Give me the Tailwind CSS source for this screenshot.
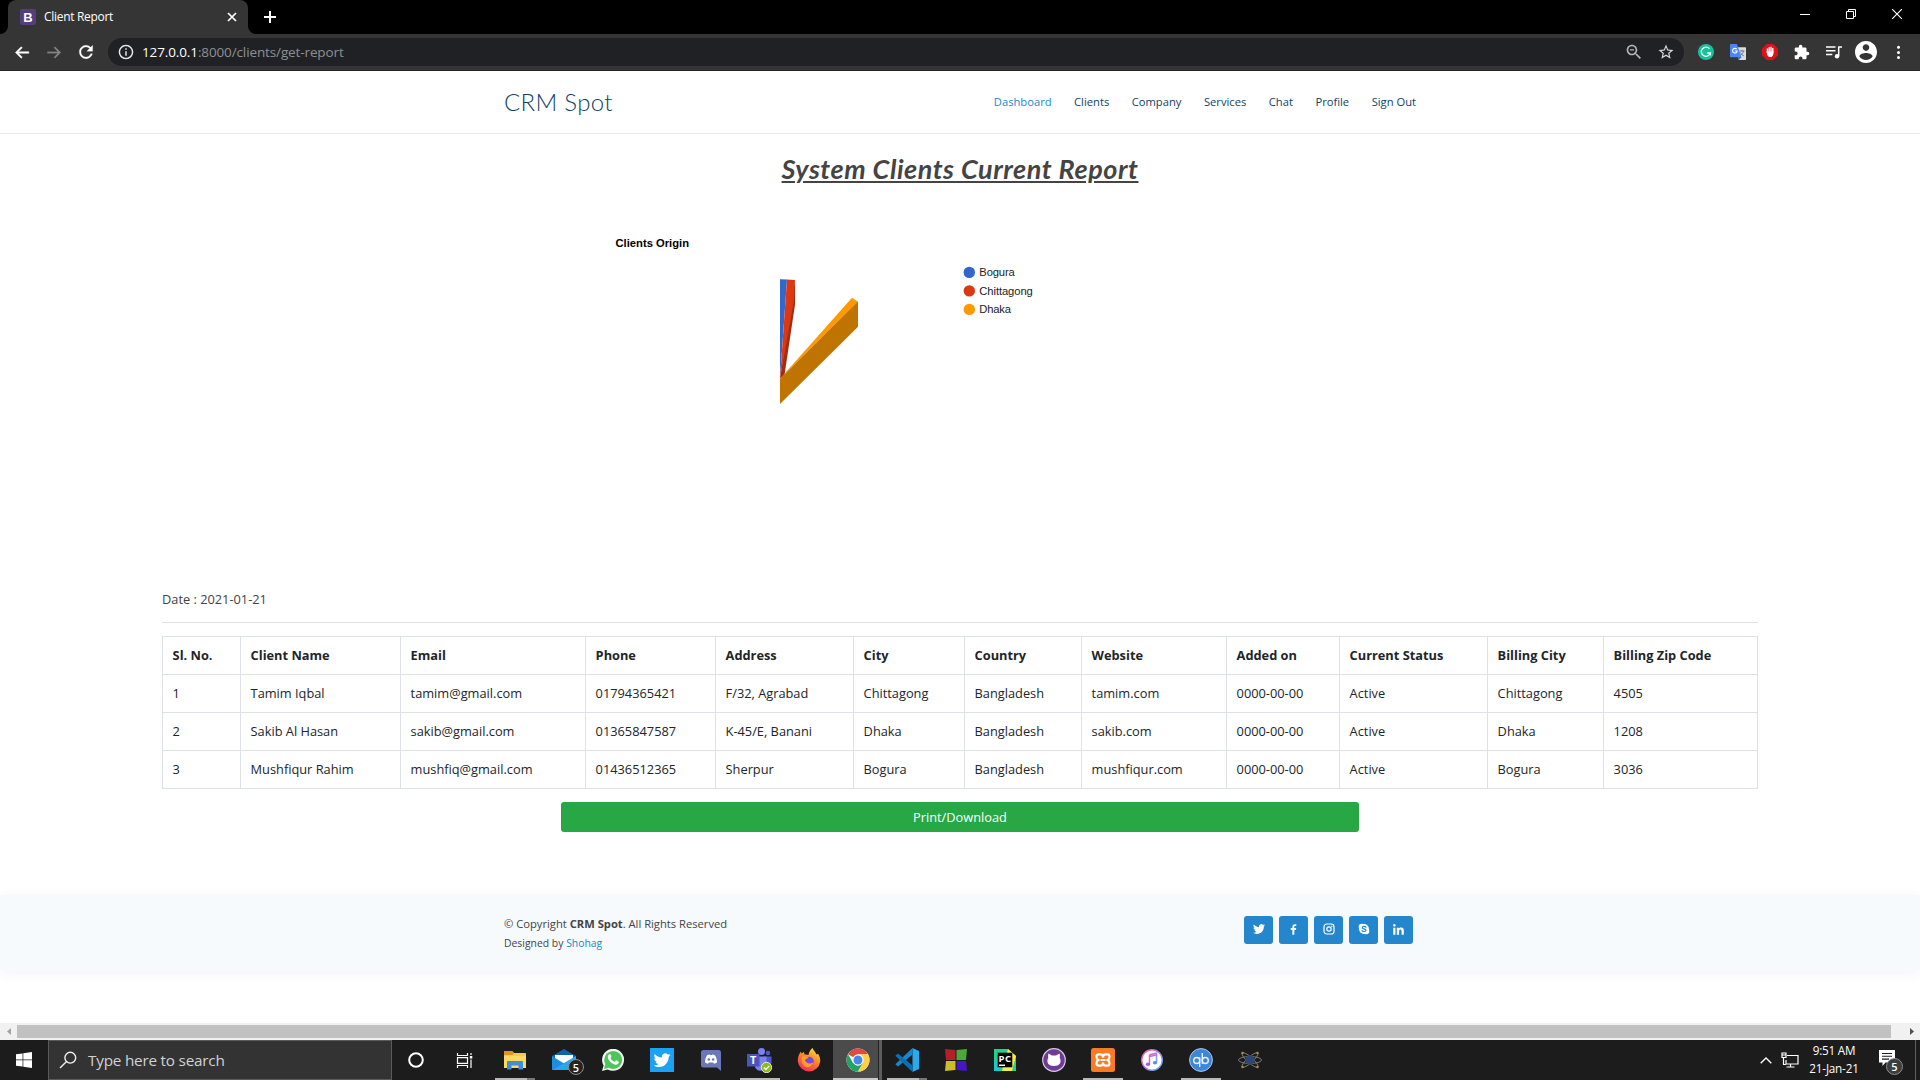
<!DOCTYPE html>
<html lang="en">
<head>
<meta charset="utf-8">
<title>Client Report</title>
<script src="https://cdn.jsdelivr.net/npm/@tailwindcss/browser@4"></script>
</head>
<body class="flex h-screen w-screen flex-col overflow-hidden bg-white font-['Open_Sans',sans-serif] text-[#444444]">

<!-- Tab strip -->
<div class="flex h-[34px] shrink-0 bg-black pl-2 text-white">
  <div class="relative flex w-60 items-center rounded-t-lg bg-[#353535] pl-3 pr-2.5">
    <svg class="absolute -left-2 bottom-0 size-2" viewBox="0 0 8 8"><path d="M8 0v8H0a8 8 0 0 0 8-8z" fill="#353535"/></svg>
    <svg class="absolute -right-2 bottom-0 size-2" viewBox="0 0 8 8"><path d="M0 0v8h8a8 8 0 0 1-8-8z" fill="#353535"/></svg>
    <div class="flex size-4 items-center justify-center rounded-[2px] bg-[#563d7c] font-['Liberation_Sans',sans-serif] text-[13px] font-bold leading-none">B</div>
    <span class="ml-2 grow text-[12px] leading-4 tracking-[-0.3px]">Client Report</span>
    <svg class="size-3" viewBox="0 0 12 12" stroke="#fff" stroke-width="1.7"><path d="M2 2l8 8M10 2l-8 8"/></svg>
  </div>
  <svg class="ml-4 mt-[11px] size-3" viewBox="0 0 12 12" stroke="#fff" stroke-width="2"><path d="M6 0v12M0 6h12"/></svg>
  <div class="ml-auto flex h-7 items-center">
    <div class="flex w-[46px] justify-center"><svg class="size-[10px]" viewBox="0 0 10 10" stroke="#fff"><path d="M0 5.5h10"/></svg></div>
    <div class="flex w-[46px] justify-center"><svg class="size-[10px]" viewBox="0 0 10 10" stroke="#fff" fill="none"><path d="M.5 2.5h7v7h-7zM2.500 2.500v-2h7v7h-2"/></svg></div>
    <div class="flex w-[46px] justify-center"><svg class="size-[10px]" viewBox="0 0 10 10" stroke="#fff" stroke-width="1.100"><path d="M0 0l10 10M10 0L0 10"/></svg></div>
  </div>
</div>

<!-- Toolbar -->
<div class="flex h-[37px] shrink-0 items-center border-b border-[#262628] bg-[#353535] px-1.5">
  <div class="flex w-8 justify-center"><svg class="size-[19px]" viewBox="1 0 24 24" fill="#fff"><path d="M21 11H7.830l4.880-4.880L11.300 4.700 4 12l7.300 7.300 1.410-1.410L7.830 13H21z" stroke="#fff" stroke-width=".6"/></svg></div>
  <div class="flex w-8 justify-center"><svg class="size-[19px]" viewBox="0 0 24 24" fill="#858585"><path d="M3 11h13.170l-4.880-4.880 1.410-1.420L20 12l-7.300 7.300-1.410-1.410L16.170 13H3z" stroke="#858585" stroke-width=".3"/></svg></div>
  <div class="flex w-8 justify-center"><svg class="size-[20px]" viewBox="0 0 24 24" fill="#fff"><path d="M17.65 6.35C16.2 4.9 14.21 4 12 4c-4.42 0-7.99 3.58-7.99 8s3.57 8 7.99 8c3.73 0 6.84-2.55 7.73-6h-2.08c-.82 2.33-3.04 4-5.65 4-3.31 0-6-2.69-6-6s2.69-6 6-6c1.66 0 3.14.69 4.22 1.78L13 11h7V4l-2.35 2.35z" stroke="#fff" stroke-width=".3"/></svg></div>
  <div class="ml-1.5 mr-1.5 flex h-7 grow items-center rounded-full bg-[#202124] pl-2.5 pr-[9px]">
    <svg class="size-4" viewBox="1 1 22 22" fill="#e8eaed"><path d="M11 7h2v2h-2zm0 4h2v6h-2zm1-9C6.48 2 2 6.48 2 12s4.48 10 10 10 10-4.48 10-10S17.520 2 12 2zm0 18c-4.410 0-8-3.590-8-8s3.590-8 8-8 8 3.590 8 8-3.590 8-8 8z"/></svg>
    <span class="ml-2 grow text-[13.5px] leading-5 tracking-[-0.12px] text-[#8f9092]"><span class="text-white">127.0.0.1</span>:8000/clients/get-report</span>
    <svg class="mr-[14px] size-[18px]" viewBox="1 1 22 22" fill="#b4b5b7"><path d="M15.500 14h-.79l-.28-.27C15.410 12.590 16 11.110 16 9.500 16 5.910 13.090 3 9.500 3S3 5.910 3 9.500 5.910 16 9.500 16c1.610 0 3.090-.59 4.230-1.570l.27.28v.79l5 4.990L20.490 19l-4.990-5zm-6 0C7.010 14 5 11.990 5 9.500S7.010 5 9.500 5 14 7.010 14 9.500 11.990 14 9.500 14zM7 8.600h5v1.700H7z"/></svg>
    <svg class="size-[18px]" viewBox="0 0 24 24" fill="#d5d6d8"><path d="M22 9.240l-7.190-.62L12 2 9.190 8.630 2 9.240l5.460 4.730L5.820 21 12 17.270 18.180 21l-1.630-7.030L22 9.240zM12 15.400l-3.760 2.270 1-4.280-3.320-2.880 4.380-.38L12 6.100l1.710 4.040 4.380.38-3.320 2.880 1 4.280L12 15.400z"/></svg>
  </div>
  <div class="flex w-8 justify-center"><svg class="size-4" viewBox="0 0 16 16" fill="none"><circle cx="8" cy="8" r="8" fill="#15c39a"/><path d="M11.500 4.700A4.600 4.600 0 1 0 12.400 9H9.300M12.400 9v2.600" stroke="#fff" stroke-width="1.300"/></svg></div>
  <div class="flex w-8 justify-center"><svg class="size-4" viewBox="0 0 16 16"><path d="M6 3.200h9.300c.4 0 .7.300.7.700V15.300c0 .4-.3.700-.7.700H8.800z" fill="#dcdcdc"/><path d="M9.500 7h5M12 5.800V7m1.600 0c-.4 2-2 3.600-3.600 4.600M10.500 8.500c.7 1.600 2 2.800 3.400 3.400" stroke="#6c7a89" fill="none"/><path d="M8.800 16L7.900 13h3.700z" fill="#3367d6"/><path d="M.7 0h6.200l4.500 13.200H.7A.7.700 0 0 1 0 12.500V.7C0 .3.300 0 .7 0z" fill="#4a87ee"/><path d="M6.700 5.200A2.300 2.300 0 1 0 7.200 7H4.900" stroke="#fff" stroke-width="1.100" fill="none"/></svg></div>
  <div class="flex w-8 justify-center"><svg class="size-4" viewBox="0 0 16 16"><path d="M4.700 0h6.600L16 4.700v6.600L11.300 16H4.700L0 11.300V4.700z" fill="#e0101b"/><path d="M5.400 8.500V5M7.200 8V3.600M9 8V3.300M10.800 8.500V4.500" stroke="#fff" stroke-width="1.400" stroke-linecap="round"/><path d="M4.700 7.500h6.800c.1 3-.6 5.600-3.300 5.600-2.200 0-3.500-2-3.500-5.600z" fill="#fff"/></svg></div>
  <div class="flex w-8 justify-center"><svg class="size-4" viewBox="1 0 23 23" fill="#fff"><path d="M20.500 11H19V7c0-1.100-.9-2-2-2h-4V3.500C13 2.120 11.880 1 10.500 1S8 2.120 8 3.500V5H4c-1.100 0-1.990.9-1.990 2v3.800H3.500c1.490 0 2.700 1.210 2.700 2.700s-1.210 2.700-2.700 2.700H2V20c0 1.100.9 2 2 2h3.800v-1.500c0-1.490 1.210-2.700 2.700-2.700 1.490 0 2.700 1.210 2.700 2.700V22H17c1.100 0 2-.9 2-2v-4h1.500c1.380 0 2.500-1.120 2.500-2.500S21.880 11 20.500 11z"/></svg></div>
  <div class="flex w-8 justify-center"><svg class="size-4" viewBox="0 0 16 16" fill="none" stroke="#fff" stroke-width="1.500"><path d="M0 3h9.500M0 6.700h9.500M0 10.400h6.300M16 3h-3.300v9"/><circle cx="11" cy="12.200" r="2.200" fill="#fff" stroke="none"/></svg></div>
  <div class="flex w-8 justify-center"><svg class="size-[22px]" viewBox="2 2 20 20" fill="#fff"><path d="M12 2C6.480 2 2 6.480 2 12s4.480 10 10 10 10-4.480 10-10S17.520 2 12 2zm0 3c1.660 0 3 1.340 3 3s-1.340 3-3 3-3-1.340-3-3 1.340-3 3-3zm0 14.200c-2.500 0-4.710-1.280-6-3.220.03-1.990 4-3.080 6-3.080 1.990 0 5.970 1.090 6 3.080-1.290 1.940-3.500 3.220-6 3.220z"/></svg></div>
  <div class="flex w-8 justify-center"><svg class="h-4 w-1" viewBox="0 0 4 16" fill="#fff"><circle cx="2.500" cy="3.200" r="1.500"/><circle cx="2.500" cy="8.400" r="1.500"/><circle cx="2.500" cy="13.600" r="1.500"/></svg></div>
</div>

<!-- Site header -->
<header class="flex h-[63px] shrink-0 items-center justify-between border-b border-[#e9ebec] px-[504px]">
  <div class="whitespace-nowrap font-['Lato',sans-serif] text-[24px] font-light leading-8 tracking-[0.3px] text-[#124265]">CRM Spot</div>
  <nav class="flex gap-[22.5px] whitespace-nowrap text-[11.2px] leading-4 text-[#124265]">
    <a class="text-[#2487ce]">Dashboard</a><a>Clients</a><a>Company</a><a>Services</a><a>Chat</a><a>Profile</a><a>Sign Out</a>
  </nav>
</header>

<!-- Report -->
<main class="flex h-[761px] shrink-0 flex-col items-center">
  <h2 class="mt-[17px] whitespace-nowrap font-['Lato',sans-serif] text-[27px] font-bold italic leading-[36px] tracking-[0.54px] underline decoration-2 underline-offset-2">System Clients Current Report</h2>
  <svg class="h-[382px] w-[960px] shrink-0" viewBox="480 187 960 382" font-family="'Liberation Sans',Arial,sans-serif" font-size="11.200">
    <text x="615.500" y="247" font-weight="bold" fill="#000" textLength="73.500">Clients Origin</text>
    <path d="M780 279.300l7 .3-7 98.400z" fill="#3366cc"/>
    <path d="M795 280.300v24.200L784.500 375 780 378.500z" fill="#a52a0e"/>
    <path d="M787 279.600l8 .5-1.300 22L780 378.500z" fill="#dc3912"/>
    <path d="M780 378.800L852 297.800l6 4z" fill="#ff9900"/>
    <path d="M780 378.800l78-77.300v25.200l-78 77.300z" fill="#bf7300"/>
    <g fill="#222"><circle cx="969.300" cy="272.400" r="5.700" fill="#3366cc"/><text x="979.300" y="276" textLength="35.500">Bogura</text>
    <circle cx="969.300" cy="290.900" r="5.700" fill="#dc3912"/><text x="979.300" y="294.700" textLength="53.500">Chittagong</text>
    <circle cx="969.300" cy="309.400" r="5.700" fill="#ff9900"/><text x="979.300" y="313" textLength="31.700">Dhaka</text></g>
  </svg>
  <div class="mt-[20px] w-[1596px] border-b border-[#e1e1e1] pb-[13px] text-[12.8px] leading-[20px]">Date : 2021-01-21</div>
  <table class="mt-[13px] w-[1596px] table-fixed border-collapse text-left text-[12.8px] leading-[19px] text-[#212529] [&_td]:border [&_td]:border-[#dee2e6] [&_td]:pl-[9.6px] [&_th]:border [&_th]:border-[#dee2e6] [&_th]:pl-[9.6px] [&_tr]:h-[38px]">
    <colgroup><col class="w-[78px]"><col class="w-[160px]"><col class="w-[185px]"><col class="w-[130px]"><col class="w-[138px]"><col class="w-[111px]"><col class="w-[117px]"><col class="w-[145px]"><col class="w-[113px]"><col class="w-[148px]"><col class="w-[116px]"><col></colgroup>
    <thead><tr><th>Sl. No.</th><th>Client Name</th><th>Email</th><th>Phone</th><th>Address</th><th>City</th><th>Country</th><th>Website</th><th>Added on</th><th>Current Status</th><th>Billing City</th><th>Billing Zip Code</th></tr></thead>
    <tbody>
      <tr><td>1</td><td>Tamim Iqbal</td><td>tamim@gmail.com</td><td>01794365421</td><td>F/32, Agrabad</td><td>Chittagong</td><td>Bangladesh</td><td>tamim.com</td><td>0000-00-00</td><td>Active</td><td>Chittagong</td><td>4505</td></tr>
      <tr><td>2</td><td>Sakib Al Hasan</td><td>sakib@gmail.com</td><td>01365847587</td><td>K-45/E, Banani</td><td>Dhaka</td><td>Bangladesh</td><td>sakib.com</td><td>0000-00-00</td><td>Active</td><td>Dhaka</td><td>1208</td></tr>
      <tr><td>3</td><td>Mushfiqur Rahim</td><td>mushfiq@gmail.com</td><td>01436512365</td><td>Sherpur</td><td>Bogura</td><td>Bangladesh</td><td>mushfiqur.com</td><td>0000-00-00</td><td>Active</td><td>Bogura</td><td>3036</td></tr>
    </tbody>
  </table>
  <button class="mt-[13px] flex h-[30px] w-[798px] shrink-0 items-center justify-center rounded-[3px] bg-[#28a745] text-[12.8px] leading-5 text-white">Print/Download</button>
</main>

<!-- Site footer -->
<footer class="flex h-[76px] shrink-0 justify-between bg-[#f6fafd] pl-[504px] pr-[507px] shadow-[0_2px_12px_rgba(18,66,101,0.06)]">
  <div class="pt-5 text-[11.2px] leading-[18px]">
    <div>© Copyright <b>CRM Spot</b>. All Rights Reserved</div>
    <div class="mt-px text-[10.400px]">Designed by <a class="text-[#2487ce]">Shohag</a></div>
  </div>
  <div class="flex gap-1.5 pt-[21px]">
    <a class="flex h-7 w-[29px] items-center justify-center rounded-[3px] bg-[#2487ce]"><svg class="mb-0.5 size-3" viewBox="0 1 24 22" fill="#fff"><path d="M23.953 4.570a10 10 0 01-2.825.775 4.958 4.958 0 002.163-2.723c-.951.555-2.005.959-3.127 1.184a4.920 4.920 0 00-8.384 4.482C7.690 8.095 4.067 6.130 1.640 3.162a4.822 4.822 0 00-.666 2.475c0 1.710.87 3.213 2.188 4.096a4.904 4.904 0 01-2.228-.616v.06a4.923 4.923 0 003.946 4.827 4.996 4.996 0 01-2.212.085 4.936 4.936 0 004.604 3.417 9.867 9.867 0 01-6.102 2.105c-.39 0-.779-.023-1.170-.067a13.995 13.995 0 007.557 2.209c9.053 0 13.998-7.496 13.998-13.985 0-.21 0-.42-.015-.63A9.935 9.935 0 0024 4.590z"/></svg></a>
    <a class="flex h-7 w-[29px] items-center justify-center rounded-[3px] bg-[#2487ce]"><svg class="mb-0.5 size-[13px]" viewBox="1 1 22 22" fill="#fff"><path d="M13.397 20.997v-8.196h2.765l.411-3.209h-3.176V7.548c0-.926.258-1.560 1.587-1.560h1.684V3.127A22.336 22.336 0 0 0 14.201 3c-2.444 0-4.122 1.492-4.122 4.231v2.355H7.332v3.209h2.753v8.202h3.312z"/></svg></a>
    <a class="flex h-7 w-[29px] items-center justify-center rounded-[3px] bg-[#2487ce]"><svg class="mb-0.5 size-3" viewBox="0 0 12 12" fill="none" stroke="#fff" stroke-width="1.200"><rect x="1" y="1" width="10" height="10" rx="2.800"/><circle cx="6" cy="6" r="2.200"/><circle cx="8.900" cy="3.200" r=".7" fill="#fff" stroke="none"/></svg></a>
    <a class="flex h-7 w-[29px] items-center justify-center rounded-[3px] bg-[#2487ce]"><svg class="mb-0.5 size-3" viewBox="0 0 12 12" fill="#fff"><circle cx="3.900" cy="3.900" r="3.200"/><circle cx="8.100" cy="8.100" r="3.200"/><circle cx="6" cy="6" r="4.900"/><path d="M8 4.300C7.500 3.200 4.200 3 4.200 4.700c0 1.600 3.800.9 3.800 2.600 0 1.600-3.500 1.500-4 .3" fill="none" stroke="#2487ce" stroke-width="1.200" stroke-linecap="round"/></svg></a>
    <a class="flex h-7 w-[29px] items-center justify-center rounded-[3px] bg-[#2487ce]"><svg class="mb-0.5 size-[13px]" viewBox="1 1 22 22" fill="#fff"><path d="M4.983 7.197a2.188 2.188 0 1 0 0-4.376 2.188 2.188 0 0 0 0 4.376zM9.237 8.855v12.139h3.769v-6.003c0-1.584.298-3.118 2.262-3.118 1.937 0 1.961 1.811 1.961 3.218v5.904H21v-6.657c0-3.270-.704-5.783-4.526-5.783-1.835 0-3.065 1.007-3.568 1.960h-.051v-1.660H9.237zm-6.142 0H6.870v12.139H3.095z"/></svg></a>
  </div>
</footer>

<!-- Horizontal scrollbar -->
<div class="mt-auto flex h-[17px] shrink-0 items-center bg-[#f1f1f1]">
  <div class="flex w-[17px] justify-center"><svg class="h-[7px] w-1" viewBox="0 0 4 7" fill="#a3a3a3"><path d="M4 0v7L0 3.500z"/></svg></div>
  <div class="h-[13px] grow bg-[#c1c1c1]"></div>
  <div class="flex w-[29px] justify-end pr-1.5"><svg class="h-[7px] w-1" viewBox="0 0 4 7" fill="#505050"><path d="M0 0v7l4-3.500z"/></svg></div>
</div>

<!-- Taskbar -->
<div class="flex h-10 shrink-0 bg-[#1c1c1c] text-white">
  <div class="flex w-12 items-center justify-center"><svg class="size-4" viewBox="0 0 16 16" fill="#fff"><path d="M0 2.300L6.600 1.400v6.200H0zM7.300 1.300L16 0v7.600H7.300zM0 8.300h6.600v6.300L0 13.700zM7.300 8.300H16V16l-8.700-1.300z"/></svg></div>
  <div class="flex w-[344px] items-center border border-[#5a5a5a] bg-[#333333] pl-2.5">
    <svg class="size-[18px]" viewBox="0 0 18 18" fill="none" stroke="#f0f0f0" stroke-width="1.400"><circle cx="11.300" cy="6.700" r="5.400"/><path d="M7.300 10.700L1 17"/></svg>
    <span class="ml-[11px] text-[15.300px] leading-5 tracking-[-0.22px] text-[#d2d2d2]">Type here to search</span>
  </div>
  <div class="-ml-px flex [&>div]:relative [&>div]:flex [&>div]:w-[49px] [&>div]:items-center [&>div]:justify-center">
    <div><svg class="size-4" viewBox="0 0 16 16"><circle cx="8" cy="8" r="6.800" fill="none" stroke="#fff" stroke-width="2"/></svg></div>
    <div class="mr-px"><svg class="size-[17px]" viewBox="0 0 17 17" fill="none" stroke="#fff" stroke-width="1.200"><path d="M1.500 1v2.500h10V1M1.500 16v-2.500h10V16M1.500 5.600h10v5.800h-10zM15 1v2M15 7.500V16"/><path d="M13.800 4h2.500v2.500h-2.500z" fill="#fff" stroke="none"/></svg></div>
    <div><svg class="size-[22px]" viewBox="0 0 22 22"><path d="M0 3c0-.6.400-1 1-1h7l2 2h11c.6 0 1 .4 1 1v14H0z" fill="#f7c94b"/><path d="M0 3c0-.6.400-1 1-1h7l2 2-1.500 2H0z" fill="#d99a1c"/><path d="M0 7h22v12H0z" fill="#fbd868"/><path d="M3 20.500v-7.300c0-.7.500-1.200 1.200-1.200h13.600c.7 0 1.200.5 1.200 1.200v7.300h-4.500v-4h-7v4z" fill="#3f8fd6"/></svg><span class="absolute bottom-0 left-[5px] h-0.5 w-8 bg-[#b9b9b9]"></span><span class="absolute bottom-0 left-[37px] h-0.5 w-2 bg-[#777777]"></span></div>
    <div><svg class="size-6" viewBox="0 0 24 24"><path d="M0 8L12 1l12 7v14H0z" fill="#0b64b4"/><path d="M3 7h18v8H3z" fill="#fff"/><path d="M0 8l12 7.500L0 22z" fill="#1b90dd"/><path d="M24 8v14H0z" fill="#28a8ea"/></svg><span class="absolute bottom-[5px] right-1 flex size-4 items-center justify-center rounded-full border border-[#8d8d8d] bg-[#242424] text-[11px] font-semibold leading-none">5</span></div>
    <div><svg class="size-[22px]" viewBox="0 0 22 22"><path d="M0 22l1.600-5.600A11 11 0 1 1 5.700 20.400z" fill="#f4f4f4"/><circle cx="11.200" cy="10.900" r="9" fill="#4cc65a"/><path d="M2 20l1.300-5 3.800 3.800z" fill="#4cc65a"/><path d="M7 5.500c1-1 1.600-.5 2.300 1.600.4 1-1.200 1.500-.6 2.400 1 1.700 2.200 2.600 3.800 3.300.7.200 1.300-1.800 2.200-1.400 2.200 1 2.500 1.200 1.900 2.700-.8 1.700-3 2-5.400.8C8 13.300 6 10.500 5.800 8.300 5.700 7 6.300 6 7 5.500z" fill="#fff"/></svg></div>
    <div><svg class="size-6" viewBox="0 0 24 24"><path d="M0 0h24v24H0z" fill="#1da1f2"/><g transform="translate(3.600 3.800) scale(.7)"><path fill="#fff" d="M23.953 4.570a10 10 0 01-2.825.775 4.958 4.958 0 002.163-2.723c-.951.555-2.005.959-3.127 1.184a4.920 4.920 0 00-8.384 4.482C7.690 8.095 4.067 6.130 1.640 3.162a4.822 4.822 0 00-.666 2.475c0 1.710.87 3.213 2.188 4.096a4.904 4.904 0 01-2.228-.616v.06a4.923 4.923 0 003.946 4.827 4.996 4.996 0 01-2.212.085 4.936 4.936 0 004.604 3.417 9.867 9.867 0 01-6.102 2.105c-.39 0-.779-.023-1.170-.067a13.995 13.995 0 007.557 2.209c9.053 0 13.998-7.496 13.998-13.985 0-.21 0-.42-.015-.63A9.935 9.935 0 0024 4.590z"/></g></svg></div>
    <div><svg class="h-[21px] w-5" viewBox="0 0 20 21"><path d="M2.500 0h15A2.500 2.500 0 0 1 20 2.500V21l-4-3.500H2.500A2.500 2.500 0 0 1 0 15V2.500A2.500 2.500 0 0 1 2.500 0z" fill="#6a78b8"/><path d="M6 5.300c1-.7 2-.9 2.600-.9l.4.600h2l.4-.6c.6 0 1.600.2 2.600.9 1.400 2.200 2 4.500 2 7-1 1-2 1.300-3 1.400l-.8-1.200H7.800L7 13.700c-1-.1-2-.4-3-1.400 0-2.500.6-4.800 2-7z" fill="#fff"/><circle cx="7.800" cy="9.500" r="1.300" fill="#6a78b8"/><circle cx="12.200" cy="9.500" r="1.300" fill="#6a78b8"/></svg></div>
    <div><svg class="size-[25px]" viewBox="0 0 25 25"><circle cx="21" cy="5" r="2.300" fill="#5059c9"/><circle cx="14.500" cy="3.500" r="3.500" fill="#7b83eb"/><path d="M17 8.500h7.500V15a4 4 0 0 1-7.500 1z" fill="#5059c9"/><path d="M9 8.500h10.500v8.500a6 6 0 0 1-11.500 2z" fill="#7b83eb"/><path d="M0 6h12.500v12.500H0z" fill="#4b53bc"/><text x="6.200" y="16.300" font-size="11" font-weight="bold" text-anchor="middle" fill="#fff" font-family="Open Sans, sans-serif">T</text><circle cx="19.500" cy="19.500" r="5.200" fill="#8cbd18" stroke="#fff" stroke-width=".8"/><path d="M17 19.600l1.900 1.900 3.300-3.600" fill="none" stroke="#fff" stroke-width="1.400"/></svg><span class="absolute bottom-0 left-[5px] h-0.5 w-10 bg-[#b9b9b9]"></span></div>
    <div><svg class="size-6" viewBox="0 0 24 24"><defs><linearGradient id="fx" x1=".8" y1="0" x2=".3" y2="1"><stop offset="0" stop-color="#ffdf3d"/><stop offset=".45" stop-color="#ff8a25"/><stop offset="1" stop-color="#f42a56"/></linearGradient></defs><path d="M15.500 0c1 3 3 3.500 4 6.500l1.500-.8c1.600 2.400 2.500 5 2.200 8A11.300 11.300 0 0 1 .8 13.500C.6 9 2 6 4 3.500l.5 2L7 4l.5 2.500c1.500-.2 2.700-.2 4 .5.500-3 2-5.500 4-7z" fill="url(#fx)"/><circle cx="12" cy="13.500" r="4.800" fill="#7a48d8"/><path d="M5.500 8.500c3-1 5 .2 6.500 1.500-2 0-3.500 1-4 2.500 2 3.500 6 3.800 8.500 1.500-1 5-6.500 7-10 3.500C4.300 15 4.300 11 5.500 8.500z" fill="#ff9a2b"/></svg></div>
    <div class="bg-[#4b4b4b]"><svg class="size-6" viewBox="0 0 24 24"><circle cx="12" cy="12" r="11.500" fill="#fff"/><path d="M12 12L2.040 6.250A11.500 11.500 0 0 1 21.960 6.250H12z" fill="#dd4b3e"/><path d="M2.040 6.250A11.500 11.500 0 0 0 12 23.500l4.980-8.600L12 12l-4.980 2.900z" fill="#1fa463"/><path d="M21.960 6.250A11.500 11.500 0 0 1 12 23.500l4.980-8.600L12 6.250z" fill="#ffce44"/><circle cx="12" cy="12" r="5.700" fill="#fff"/><circle cx="12" cy="12" r="4.500" fill="#4688f1"/></svg><span class="absolute bottom-0 left-0 h-0.5 w-full bg-[#c9c9c9]"></span><span class="absolute bottom-0 right-0 h-full w-1 border-l border-[#222222] bg-[#5d5d5d]"></span></div>
    <div><svg class="size-6" viewBox="0 0 24 24"><path d="M17.500 0L24 3v18l-6.500 3z" fill="#29a9ee"/><path d="M17.500 0v6.500L3 18.500.3 16.300z" fill="#1787cf"/><path d="M17.500 24v-6.500L3 5.500.3 7.700z" fill="#0a6fb4"/></svg><span class="absolute bottom-0 left-[5px] h-0.5 w-8 bg-[#b9b9b9]"></span><span class="absolute bottom-0 left-[37px] h-0.5 w-2 bg-[#777777]"></span></div>
    <div><svg class="size-[22px]" viewBox="0 0 22 22"><path d="M0 0l10.500 1v10H1z" fill="#b3202a"/><path d="M11.500 1L22 0l-1 11h-9.500z" fill="#4da83b"/><path d="M1 12h9.500v9L0 22z" fill="#cbbf28"/><path d="M11.500 12H21l1 10-10.500-1z" fill="#4517c2"/></svg></div>
    <div><svg class="size-[22px]" viewBox="0 0 22 22"><path d="M0 0h14l8 7v15H0z" fill="#1fd28e"/><path d="M14 0l8 7-4 15H8z" fill="#f7ee4e"/><path d="M0 10l6 12H0z" fill="#18c8d8"/><path d="M3.700 3.700h14.600v14.600H3.700z" fill="#000"/><path d="M5 15.500h6V17H5z" fill="#fff"/><text x="4.500" y="12.600" font-size="9.500" font-weight="bold" fill="#fff" font-family="Open Sans, sans-serif" textLength="12.500">PC</text></svg></div>
    <div><svg class="size-6" viewBox="0 0 24 24"><circle cx="12" cy="12" r="11.300" fill="#6e3c97" stroke="#d9c9e6" stroke-width="1.200"/><path d="M6.500 5.500l3.500 2h4l3.500-2c.5 1.500.5 2.800.2 4 2.500 5-.5 8.500-5.700 8.500s-8.200-3.500-5.700-8.500c-.3-1.200-.3-2.500.2-4z" fill="#fff"/></svg></div>
    <div><svg class="size-6" viewBox="0 0 24 24"><rect width="24" height="24" rx="2.500" fill="#fb7a24"/><path d="M12 9.500c0-2.200-1-3.200-2.500-3.200H7.800c-3 0-3 4.200-.5 5.700-2.500 1.500-2.500 5.700.5 5.700h1.700c1.500 0 2.500-1 2.500-3.200M12 9.500c0-2.200 1-3.200 2.500-3.200h1.700c3 0 3 4.200.5 5.700 2.500 1.500 2.500 5.700-.5 5.700h-1.700c-1.500 0-2.500-1-2.500-3.200M9.500 12h5" fill="none" stroke="#fff" stroke-width="2.200"/></svg><span class="absolute bottom-0 left-[5px] h-0.5 w-10 bg-[#b9b9b9]"></span></div>
    <div><svg class="size-[22px]" viewBox="0 0 22 22"><defs><linearGradient id="it" x1="0" y1="0" x2="1" y2="1"><stop offset="0" stop-color="#f85ba8"/><stop offset=".5" stop-color="#b078e6"/><stop offset="1" stop-color="#45c2f5"/></linearGradient></defs><circle cx="11" cy="11" r="10.300" fill="#fff" stroke="url(#it)" stroke-width="1.400"/><path d="M8.500 5.800l7-1.500v9.200M8.500 5.800v9.200M8.500 7.600l7-1.500" fill="none" stroke="url(#it)" stroke-width="1.500"/><ellipse cx="7" cy="15.200" rx="2.100" ry="1.800" fill="#a25be0"/><ellipse cx="14" cy="13.700" rx="2.100" ry="1.800" fill="#5a8df0"/></svg></div>
    <div><svg class="size-6" viewBox="0 0 24 24"><circle cx="12" cy="12" r="11.400" fill="#3d86d8" stroke="#a9c9ee" stroke-width="1"/><g fill="none" stroke="#e8f1fb" stroke-width="1.400"><circle cx="7.700" cy="12.500" r="3"/><path d="M10.700 9.300v9.700M13.300 5v10.700"/><circle cx="16.300" cy="12.500" r="3"/></g></svg><span class="absolute bottom-0 left-[5px] h-0.5 w-10 bg-[#b9b9b9]"></span></div>
    <div><svg class="size-6" viewBox="0 0 24 24"><g fill="none" stroke="#85837d" stroke-width=".9"><ellipse cx="12" cy="12" rx="11.500" ry="3.500"/><ellipse cx="12" cy="12" rx="10.500" ry="2.800" transform="rotate(42 12 12)"/><ellipse cx="12" cy="12" rx="10.500" ry="2.800" transform="rotate(-42 12 12)"/></g><circle cx="12" cy="12" r="4.700" fill="#2d4877"/><g fill="#b3924f"><circle cx="4.500" cy="5" r="1.200"/><circle cx="19.500" cy="5" r="1.200"/><circle cx="4.500" cy="19" r="1.200"/><circle cx="19.500" cy="19" r="1.200"/></g></svg></div>
  </div>
  <div class="ml-auto flex items-center">
    <svg class="h-[7px] w-3" viewBox="0 0 12 7" fill="none" stroke="#fff" stroke-width="1.400"><path d="M.7 6.300L6 1l5.300 5.300"/></svg>
    <svg class="ml-[9px] h-4 w-[18px]" viewBox="0 0 18 16" fill="none" stroke="#fff" stroke-width="1.200"><path d="M6 3.500h11v8.500H5V8M9.500 12v3M5.500 15h8M2.500 6v6.500H5M1 1h4v4.500H1zM1 3h4"/></svg>
    <div class="ml-[9px] mt-[-2px] w-[52px] whitespace-nowrap text-center text-[11.700px] leading-[18px] tracking-[-0.2px]">9:51 AM<br>21-Jan-21</div>
    <div class="relative ml-[19px] mr-3 h-[26px] w-6">
      <svg class="absolute left-0 top-[3px] h-4 w-4" viewBox="0 0 16 16"><path d="M0 0h16v12.500H6.500L3.500 16v-3.500H0z" fill="#fff"/><path d="M3 3.500h10M3 6.300h10M3 9.100h7" stroke="#1c1c1c" stroke-width="1.100"/></svg>
      <span class="absolute left-[7px] top-[11px] flex size-[17px] items-center justify-center rounded-full border border-[#8d8d8d] bg-[#3d3d3d] text-[11px] font-semibold leading-none">5</span>
    </div>
    <div class="mr-1 h-10 w-px bg-[#5f5f5f]"></div>
  </div>
</div>
</body>
</html>
